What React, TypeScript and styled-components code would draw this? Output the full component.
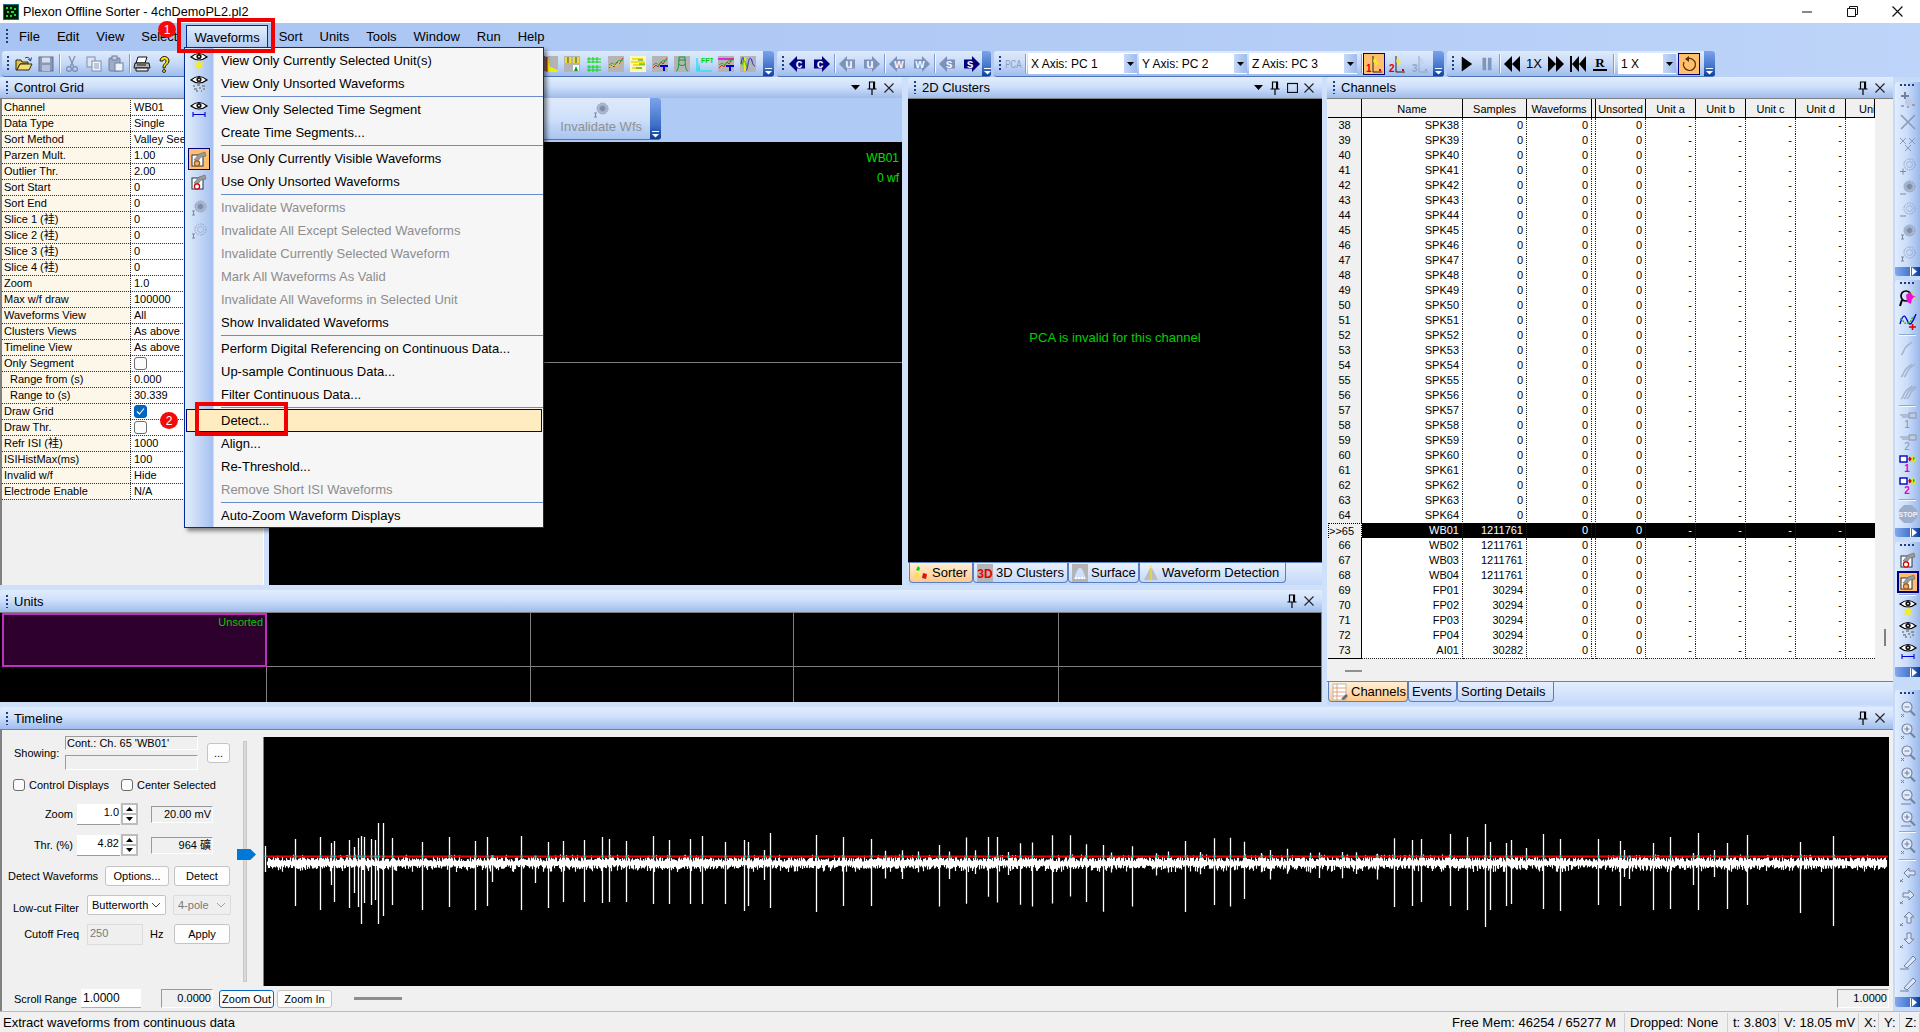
import React from "react";
import styled, { createGlobalStyle } from "styled-components";

const GlobalStyle = createGlobalStyle`
  html, body {
    margin: 0;
    padding: 0;
    background: #f0f0f0;
  }
  * {
    box-sizing: border-box;
  }
  body {
    font-family: "Liberation Sans", "Noto Sans CJK SC", sans-serif;
    font-size: 11px;
    color: #000;
  }
`;

const Page = styled.div`
  position: relative;
  width: 1920px;
  height: 1032px;
  overflow: hidden;
  display: flex;
  flex-direction: column;
  background: #f0f0f0;
`;

/* ---------- title + menu ---------- */

const TitleBar = styled.div`
  height: 23px;
  background: #fff;
  display: flex;
  align-items: center;
  padding-left: 3px;
  font-size: 12.7px;
  flex: none;
`;

const TitleText = styled.span`
  margin-left: 4px;
  flex: 1;
`;

const WinButton = styled.div`
  width: 45px;
  height: 23px;
  display: flex;
  align-items: center;
  justify-content: center;
`;

const MenuBar = styled.div`
  height: 28px;
  flex: none;
  display: flex;
  align-items: flex-start;
  padding: 2px 0 0 6px;
  background: linear-gradient(to right, #a8c4f2, #b3ccf6 60%, #bed4f9);
  font-size: 13px;
`;

const Grip = styled.div`
  width: 2px;
  height: 15px;
  flex: none;
  background: repeating-linear-gradient(to bottom, #1d3f82 0 2px, transparent 2px 4px);
`;

const MenuGrip = styled(Grip)`
  margin: 4px 2.5px 0 0;
`;

const MenuItem = styled.div<{ $open?: boolean }>`
  height: 23px;
  padding: 0 ${({ $open }) => ($open ? "7.5px" : "8.5px")};
  margin-right: ${({ $open }) => ($open ? "2px" : "0")};
  display: flex;
  align-items: center;
  border: ${({ $open }) => ($open ? "1px solid #002d96" : "none")};
  border-bottom: none;
  background: ${({ $open }) => ($open ? "linear-gradient(#e3eefd, #b3cbf2)" : "transparent")};
`;

/* ---------- toolbars ---------- */

const ToolRow = styled.div`
  height: 26px;
  flex: none;
  display: flex;
  gap: 3px;
  padding-left: 2px;
  background: linear-gradient(to right, #a8c4f2, #b3ccf6 60%, #bed4f9);
`;

const Toolbar = styled.div<{ $w: number }>`
  width: ${({ $w }) => $w}px;
  height: 26px;
  display: flex;
  align-items: center;
  padding-left: 5px;
  border-radius: 3px;
  overflow: hidden;
  background: linear-gradient(#dfebfc, #c6d9f8 50%, #9fbcec);
  border-bottom: 1px solid #4a73b8;
`;

const ToolGrip = styled(Grip)`
  margin-right: 2px;
`;

const Cell = styled.div<{ $w?: number; $on?: boolean }>`
  width: ${({ $w }) => $w ?? 22}px;
  height: 22px;
  flex: none;
  display: flex;
  align-items: center;
  justify-content: center;
  font-size: 13px;
  background: ${({ $on }) => ($on ? "#ffbf6d" : "transparent")};
  border: 1px solid ${({ $on }) => ($on ? "#000080" : "transparent")};
`;

const Gap = styled.div<{ $w: number }>`
  width: ${({ $w }) => $w}px;
  flex: none;
`;

const ToolSep = styled.div`
  width: 1px;
  height: 19px;
  flex: none;
  margin: 0 1px 0 2px;
  background: #7e9bd2;
  box-shadow: 1px 0 0 #f4f8ff;
`;

const ToolCap = styled.div`
  width: 11px;
  height: 26px;
  margin-left: auto;
  flex: none;
  display: flex;
  align-items: flex-end;
  justify-content: center;
  padding-bottom: 2px;
  background: linear-gradient(#7ba3ea, #3e70c8 65%, #083a94);
`;

const Combo = styled.div<{ $w: number }>`
  width: ${({ $w }) => $w}px;
  height: 21px;
  flex: none;
  margin-right: 2px;
  display: flex;
  align-items: center;
  background: #fff;
  font-size: 12px;
  padding-left: 3px;
`;

const ComboText = styled.span`
  flex: 1;
`;

const ComboArrow = styled.div`
  width: 13px;
  height: 19px;
  display: flex;
  align-items: center;
  justify-content: center;
  background: linear-gradient(to right, #c5d8f8, #9ebbed);
`;

const PcaLabel = styled.span`
  color: #8b9dbd;
  font-size: 11px;
  transform: scaleX(0.72);
`;

/* ---------- dock layout ---------- */

const Workspace = styled.div`
  flex: 1;
  min-height: 0;
  display: flex;
  background: #cfe0fb;
`;

const Dock = styled.div`
  width: 1893px;
  flex: none;
  display: flex;
  flex-direction: column;
`;

const UpperDock = styled.div`
  height: 628px;
  flex: none;
  display: flex;
`;

const LeftStack = styled.div`
  width: 1322px;
  flex: none;
  display: flex;
  flex-direction: column;
`;

const MainRow = styled.div`
  height: 508px;
  flex: none;
  display: flex;
`;

const Panel = styled.div<{ $w?: number; $ml?: number }>`
  width: ${({ $w }) => ($w ? `${$w}px` : "auto")};
  margin-left: ${({ $ml }) => $ml ?? 0}px;
  flex: none;
  display: flex;
  flex-direction: column;
  min-height: 0;
`;

const PanelHeader = styled.div<{ $h?: number }>`
  height: ${({ $h }) => $h ?? 21}px;
  flex: none;
  display: flex;
  align-items: center;
  padding: 0 5px 0 6px;
  border-top-left-radius: 3px;
  font-size: 13px;
  background: linear-gradient(#e2edfd, #cfe0fa 45%, #9fbcec);
`;

const HeaderGrip = styled(Grip)`
  margin-right: 6px;
  height: 13px;
`;

const HeaderTitle = styled.span`
  flex: 1;
`;

const HeaderIcon = styled.div`
  width: 16px;
  height: 16px;
  margin-left: 1px;
  display: flex;
  align-items: center;
  justify-content: center;
`;

const Sunken = styled.div`
  flex: 1;
  min-height: 0;
  display: flex;
  flex-direction: column;
  background: #f0f0f0;
  border-top: 1px solid #808080;
`;

/* ---------- control grid ---------- */

const GridBody = styled(Sunken)`
  border-left: 2px solid #808080;
  border-right: 1px solid #fff;
  padding-top: 1px;
`;

const GridRow = styled.div`
  height: 16px;
  flex: none;
  display: grid;
  grid-template-columns: 129px 1fr;
  border-bottom: 1px dotted #333;
`;

const GridName = styled.div<{ $indent?: boolean }>`
  background: #fdf7ea;
  border-right: 1px dotted #333;
  padding-left: ${({ $indent }) => ($indent ? "8px" : "2px")};
  line-height: 15px;
  white-space: nowrap;
`;

const GridValue = styled.div`
  background: #fff;
  padding-left: 3px;
  line-height: 15px;
  white-space: nowrap;
  display: flex;
  align-items: center;
`;

const CheckBox = styled.div<{ $on?: boolean; $size?: number }>`
  width: ${({ $size }) => $size ?? 13}px;
  height: ${({ $size }) => $size ?? 13}px;
  flex: none;
  border-radius: 3px;
  border: 1px solid ${({ $on }) => ($on ? "#0060c0" : "#6d6d6d")};
  background: ${({ $on }) => ($on ? "#0067c0" : "#fbfbfb")};
  display: flex;
  align-items: center;
  justify-content: center;
`;

/* ---------- middle panel ---------- */

const BandRow = styled.div`
  height: 44px;
  flex: none;
  background: #b0caf6;
  display: flex;
`;

const BigToolbar = styled.div`
  width: 392px;
  height: 42px;
  display: flex;
  justify-content: flex-end;
  border-radius: 3px;
  overflow: hidden;
  background: linear-gradient(#dfebfc, #cfe0fa 50%, #a9c4f0);
  border-bottom: 1px solid #4a73b8;
`;

const BigTool = styled.div`
  display: flex;
  flex-direction: column;
  align-items: center;
  justify-content: flex-end;
  padding: 0 8px 5px;
  color: #919191;
  font-size: 13px;
`;

const BigCap = styled(ToolCap)`
  margin-left: 0;
  height: 42px;
`;

const BlackTop = styled.div`
  height: 221px;
  flex: none;
  background: #000;
  border-bottom: 1px solid #808080;
  display: flex;
  flex-direction: column;
  align-items: flex-end;
  padding: 9px 3px 0 0;
  color: #00e000;
  font-size: 12px;
  gap: 6px;
`;

const BlackFill = styled.div`
  flex: 1;
  background: #000;
`;

/* ---------- clusters ---------- */

const ClusterView = styled.div`
  height: 464px;
  flex: none;
  background: #000;
  border-top: 1px solid #808080;
  display: flex;
  align-items: center;
  justify-content: center;
  color: #00d000;
  font-size: 13px;
  padding-top: 14px;
`;

const TabStrip = styled.div<{ $h?: number }>`
  height: ${({ $h }) => $h ?? 23}px;
  flex: none;
  display: flex;
  align-items: flex-start;
  padding-left: 1px;
  background: linear-gradient(#e4eefd, #c4d8f9);
  border-top: 1px solid #5e84c4;
`;

const Tab = styled.div<{ $w: number; $on?: boolean }>`
  width: ${({ $w }) => $w}px;
  height: 20px;
  flex: none;
  display: flex;
  align-items: center;
  gap: 3px;
  padding-left: 3px;
  font-size: 13px;
  white-space: nowrap;
  border: 1px solid #5b7fbe;
  border-top: none;
  border-radius: 0 0 4px 4px;
  background: ${({ $on }) => ($on ? "linear-gradient(#fff0d6, #ffc98a)" : "linear-gradient(#e8f0fd, #c6d9f9)")};
`;

/* ---------- units ---------- */

const UnitsPanel = styled(Panel)`
  margin-top: 5px;
  height: 112px;
`;

const UnitsGrid = styled.div`
  flex: 1;
  display: grid;
  grid-template-columns: 265px 264px 263px 265px 1fr;
  grid-template-rows: 54px 1fr;
  background: #000;
  border-top: 1px solid #808080;
  padding-left: 2px;
`;

const UnitCell = styled.div<{ $mark?: boolean; $bottom?: boolean }>`
  border-right: 1px solid #808080;
  border-bottom: ${({ $bottom }) => ($bottom ? "1px solid #808080" : "none")};
  outline: ${({ $mark }) => ($mark ? "2px solid #c030c0" : "none")};
  outline-offset: -2px;
  background: ${({ $mark }) => ($mark ? "#2e002e" : "#000")};
  color: #00c800;
  font-size: 11px;
  text-align: right;
  padding: 3px 3px 0 0;
`;

/* ---------- channels ---------- */

const ChannelsBody = styled(Sunken)`
  flex-direction: row;
  height: 583px;
  flex: none;
  padding-left: 1px;
`;

const ChannelsMain = styled.div`
  width: 547px;
  flex: none;
  display: flex;
  flex-direction: column;
`;

const Gutter = styled.div`
  flex: 1;
  padding-left: 9px;
`;

const GutterThumb = styled.div`
  width: 2px;
  height: 17px;
  margin-top: 530px;
  background: #808080;
`;

const HeadRow = styled.div`
  height: 19px;
  flex: none;
  display: grid;
  grid-template-columns: 34px 101px 64px 65px 4px 50px 50px 50px 50px 50px 29px;
  border-bottom: 1px solid #000;
`;

const HeadCell = styled.div<{ $clip?: boolean }>`
  background: #f0f0f0;
  border-right: 1px solid #000;
  text-align: ${({ $clip }) => ($clip ? "left" : "center")};
  padding-left: ${({ $clip }) => ($clip ? "13px" : "0")};
  line-height: 20px;
  white-space: nowrap;
  overflow: hidden;
`;

const DataRow = styled(HeadRow)<{ $sel?: boolean }>`
  height: 15px;
  border-bottom: none;
  background: ${({ $sel }) => ($sel ? "#000" : "#fff")};
  color: ${({ $sel }) => ($sel ? "#fff" : "#000")};
`;

const RowHead = styled.div<{ $cur?: boolean }>`
  background: #f0f0f0;
  color: #000;
  text-align: ${({ $cur }) => ($cur ? "right" : "center")};
  padding-right: ${({ $cur }) => ($cur ? "11px" : "0")};
  line-height: 15px;
  border-right: 1px ${({ $cur }) => ($cur ? "dotted" : "solid")} #000;
  border-bottom: 1px ${({ $cur }) => ($cur ? "dotted" : "solid")} #000;
  border-top: ${({ $cur }) => ($cur ? "1px dotted #000" : "none")};
  border-left: ${({ $cur }) => ($cur ? "1px dotted #000" : "none")};
`;

const DataCell = styled.div`
  text-align: right;
  padding-right: 3px;
  line-height: 15px;
  border-right: 1px dotted #222;
  border-bottom: 1px dotted #222;
  overflow: hidden;
  white-space: nowrap;
`;

const LastCell = styled(DataCell)`
  border-right: none;
`;

const ScrollStub = styled.div`
  flex: 1;
  padding: 12px 0 0 17px;
`;

const HThumb = styled.div<{ $w: number }>`
  width: ${({ $w }) => $w}px;
  height: 2px;
  background: #909090;
`;

const ChannelTabs = styled(TabStrip)`
  height: 24px;
`;

/* ---------- timeline ---------- */

const TimelinePanel = styled.div`
  margin-top: 2px;
  flex: 1;
  min-height: 0;
  display: flex;
  flex-direction: column;
`;

const TimelineBody = styled(Sunken)`
  border-left: 2px solid #808080;
`;

const TimelineUpper = styled.div`
  height: 257px;
  flex: none;
  display: flex;
`;

const Controls = styled.div`
  width: 233px;
  flex: none;
  display: flex;
  flex-direction: column;
`;

const CtlRow = styled.div<{ $h: number; $mt: number; $pl?: number }>`
  height: ${({ $h }) => $h}px;
  margin-top: ${({ $mt }) => $mt}px;
  padding-left: ${({ $pl }) => $pl ?? 0}px;
  flex: none;
  display: flex;
  align-items: center;
`;

const CtlLabel = styled.div<{ $w: number; $right?: boolean; $ml?: number; $drop?: number }>`
  width: ${({ $w }) => $w}px;
  margin-left: ${({ $ml }) => $ml ?? 0}px;
  padding-top: ${({ $drop }) => $drop ?? 0}px;
  text-align: ${({ $right }) => ($right ? "right" : "left")};
  flex: none;
  white-space: nowrap;
`;

const FieldStack = styled.div`
  width: 133px;
  display: flex;
  flex-direction: column;
  gap: 5px;
  flex: none;
`;

const ReadField = styled.div<{ $w?: number; $h?: number; $ml?: number; $right?: boolean }>`
  width: ${({ $w }) => ($w ? `${$w}px` : "100%")};
  height: ${({ $h }) => $h ?? 15}px;
  margin-left: ${({ $ml }) => $ml ?? 0}px;
  flex: none;
  border: 1px solid;
  border-color: #9a9a9a #fff #fff #9a9a9a;
  padding: 0 1px;
  line-height: ${({ $h }) => ($h ?? 15) - 2}px;
  text-align: ${({ $right }) => ($right ? "right" : "left")};
  white-space: nowrap;
  overflow: hidden;
  background: #f0f0f0;
`;

const PushButton = styled.div<{ $w: number; $h?: number; $ml?: number; $focus?: boolean }>`
  width: ${({ $w }) => $w}px;
  height: ${({ $h }) => $h ?? 20}px;
  margin-left: ${({ $ml }) => $ml ?? 0}px;
  flex: none;
  display: flex;
  align-items: center;
  justify-content: center;
  background: #fdfdfd;
  border: 1px solid ${({ $focus }) => ($focus ? "#0067c0" : "#c4c4c4")};
  border-radius: 3px;
  white-space: nowrap;
`;

const NumInput = styled.div<{ $w: number; $ml?: number; $disabled?: boolean }>`
  width: ${({ $w }) => $w}px;
  height: 21px;
  margin-left: ${({ $ml }) => $ml ?? 0}px;
  flex: none;
  background: ${({ $disabled }) => ($disabled ? "#efefef" : "#fff")};
  color: ${({ $disabled }) => ($disabled ? "#7a7a7a" : "#000")};
  border: ${({ $disabled }) => ($disabled ? "1px solid #dcdcdc" : "none")};
  border-bottom: 1px solid ${({ $disabled }) => ($disabled ? "#dcdcdc" : "#9a9a9a")};
  display: flex;
  align-items: center;
  justify-content: ${({ $disabled }) => ($disabled ? "flex-start" : "flex-end")};
  padding: 0 1px 3px 2px;
`;

const Spinner = styled.div`
  width: 17px;
  height: 22px;
  flex: none;
  margin-left: 1px;
  display: flex;
  flex-direction: column;
  justify-content: center;
  gap: 0;
  background: #f0f0f0;
  border: 1px solid #bdbdbd;
`;

const SpinBtn = styled.div`
  flex: 1;
  display: flex;
  align-items: center;
  justify-content: center;
  background: #fdfdfd;
  border: 1px solid #bdbdbd;
`;

const SelectBox = styled.div<{ $w: number; $ml?: number; $disabled?: boolean }>`
  width: ${({ $w }) => $w}px;
  height: 20px;
  margin-left: ${({ $ml }) => $ml ?? 0}px;
  flex: none;
  display: flex;
  align-items: center;
  justify-content: space-between;
  padding: 0 4px 0 4px;
  color: ${({ $disabled }) => ($disabled ? "#7a7a7a" : "#000")};
  background: ${({ $disabled }) => ($disabled ? "#efefef" : "#fdfdfd")};
  border: 1px solid ${({ $disabled }) => ($disabled ? "#dcdcdc" : "#c4c4c4")};
  border-radius: 2px;
`;

const SliderCol = styled.div`
  width: 28px;
  flex: none;
  padding: 11px 0 5px 8px;
`;

const SliderTrack = styled.div`
  position: relative;
  width: 4px;
  height: 100%;
  background: #d9d9d9;
  border: 1px solid #c8c8c8;
`;

const SliderMark = styled.div`
  position: absolute;
  left: -7px;
  top: 107px;
  width: 19px;
  height: 11px;
  background: #0078d7;
  clip-path: polygon(0 0, 70% 0, 100% 50%, 70% 100%, 0 100%);
`;

const PlotColumn = styled.div`
  width: 1626px;
  flex: none;
  padding-top: 7px;
`;

const Plot = styled.div`
  height: 249px;
  background: #000;
  border-left: 1px solid #808080;
  line-height: 0;
`;

const TimelineLower = styled.div`
  flex: 1;
  display: flex;
  align-items: center;
  padding-bottom: 1px;
`;

const LowerThumb = styled.div`
  width: 48px;
  height: 3px;
  margin-left: 22px;
  background: #8e8e8e;
`;

const LowerEnd = styled.div`
  margin-left: auto;
  margin-right: 4px;
`;

const ScrollInput = styled.div`
  width: 60px;
  height: 19px;
  flex: none;
  background: #fff;
  border-bottom: 1px solid #b0b0b0;
  padding-left: 2px;
  line-height: 19px;
  font-size: 12px;
`;

/* ---------- status ---------- */

const StatusBar = styled.div`
  height: 21px;
  flex: none;
  display: flex;
  align-items: center;
  background: #f0f0f0;
  border-top: 1px solid #b8b8b8;
  font-size: 13px;
  padding-left: 3px;
`;

const StatusMain = styled.div`
  flex: 1;
`;

const StatusCell = styled.div<{ $w: number }>`
  width: ${({ $w }) => $w}px;
  height: 19px;
  flex: none;
  border-right: 1px solid #d0d0d0;
  line-height: 19px;
  padding-left: 5px;
  white-space: nowrap;
`;

/* ---------- right rail ---------- */

const Rail = styled.div`
  flex: 1;
  display: flex;
  flex-direction: column;
  align-items: flex-end;
  background: #c6daf9;
`;

const RailBar = styled.div<{ $mt: number }>`
  width: 25px;
  margin-top: ${({ $mt }) => $mt}px;
  flex: none;
  display: flex;
  flex-direction: column;
  align-items: center;
  border-radius: 3px 0 0 3px;
  overflow: hidden;
  background: linear-gradient(to right, #e2edfd, #c9dcfa 50%, #9ab8ea);
`;

const RailGrip = styled.div<{ $h: number }>`
  width: 100%;
  height: ${({ $h }) => $h}px;
  flex: none;
  padding: 2px 4px 0 5px;
  &::before {
    content: "";
    display: block;
    height: 2px;
    background: repeating-linear-gradient(to right, #1d3f82 0 2px, transparent 2px 4px);
  }
`;

const RailSep = styled.div<{ $h: number }>`
  width: 100%;
  height: ${({ $h }) => $h}px;
  flex: none;
  display: flex;
  align-items: center;
  padding: 0 4px;
  &::before {
    content: "";
    width: 100%;
    height: 1px;
    background: #f4f8ff;
    box-shadow: 0 -1px 0 #8ba6d8;
  }
`;

const RailCell = styled.div<{ $on?: boolean }>`
  width: 22px;
  height: 22px;
  flex: none;
  display: flex;
  align-items: center;
  justify-content: center;
  background: ${({ $on }) => ($on ? "#ffbf6d" : "transparent")};
  border: ${({ $on }) => ($on ? "2px solid #000080" : "none")};
`;

const RailCap = styled.div<{ $h: number; $mt: number }>`
  width: 100%;
  height: ${({ $h }) => $h}px;
  margin-top: ${({ $mt }) => $mt}px;
  flex: none;
  display: flex;
  align-items: center;
  justify-content: flex-end;
  padding-right: 2px;
  background: linear-gradient(to right, #84a9ec, #3a6ec9 70%, #0a3c98);
`;

/* ---------- dropdown + annotation overlays ---------- */

const Dropdown = styled.div`
  position: absolute;
  left: 184px;
  top: 47px;
  width: 360px;
  height: 481px;
  padding: 1px 0 0 0;
  background: linear-gradient(to right, #e3eefc, #a5c0f0 28px, #f6f6f6 29px);
  border: 1px solid #002d96;
  box-shadow: 3px 3px 4px rgba(0, 0, 0, 0.45);
  font-size: 13px;
`;

const DropItem = styled.div<{ $disabled?: boolean; $hot?: boolean }>`
  height: 23px;
  display: flex;
  align-items: center;
  color: ${({ $disabled }) => ($disabled ? "#8d8d8d" : "#000")};
  background: ${({ $hot }) => ($hot ? "#ffecc0" : "transparent")};
  border: 1px solid ${({ $hot }) => ($hot ? "#000080" : "transparent")};
  margin: 0 1px;
  white-space: nowrap;
`;

const DropIcon = styled.div<{ $on?: boolean }>`
  width: 20px;
  height: 20px;
  margin: 0 12px 0 2px;
  flex: none;
  display: flex;
  align-items: center;
  justify-content: center;
  background: ${({ $on }) => ($on ? "#ffbf6d" : "transparent")};
  outline: ${({ $on }) => ($on ? "1px solid #000080" : "none")};
`;

const DropSep = styled.div`
  height: 3px;
  margin-left: 36px;
  display: flex;
  align-items: center;
  &::before {
    content: "";
    width: 100%;
    height: 1px;
    background: #6a8ccb;
  }
`;

const RedBox = styled.div<{ $x: number; $y: number; $w: number; $h: number }>`
  position: absolute;
  left: ${({ $x }) => $x}px;
  top: ${({ $y }) => $y}px;
  width: ${({ $w }) => $w}px;
  height: ${({ $h }) => $h}px;
  border: 4px solid #f00000;
`;

const Badge = styled.div<{ $x: number; $y: number }>`
  position: absolute;
  left: ${({ $x }) => $x - 9}px;
  top: ${({ $y }) => $y - 8}px;
  width: 18px;
  height: 17px;
  border-radius: 50%;
  background: #f30a0a;
  color: #fff;
  display: flex;
  align-items: center;
  justify-content: center;
  font-size: 12px;
`;

/* ---------- drawings ---------- */

const Svg = ({ s = 18, vb = 18, children }: { s?: number; vb?: number; children: React.ReactNode }) => (
  <svg width={s} height={s} viewBox={`0 0 ${vb} ${vb}`}>
    {children}
  </svg>
);

const Eye = ({ under }: { under?: "spark" | "noise" | "bar" }) => (
  <Svg>
    <path d="M1 5 Q9 -2 17 5 Q9 11 1 5z" fill="#fff" stroke="#000" strokeWidth="1.2" />
    <circle cx="9" cy="4.6" r="2.6" fill="#111" />
    <circle cx="9" cy="4.6" r="0.9" fill="#fff" />
    {under === "spark" && <path d="M9 8 l1.5 3 3-1-2 3 2 3-3.2-1-1.3 2.6-1.3-2.6-3.2 1 2-3-2-3 3 1z" fill="#f4ee20" />}
    {under === "noise" && <path d="M3 11h2M7 10h3M12 11h3M4 14h3M9 13h2M13 14h2M6 16h2M11 16h1" stroke="#808080" strokeWidth="1.4" />}
    {under === "bar" && <path d="M3 11v5M15 11v5M3 13.5h12" stroke="#0000d0" strokeWidth="1.1" fill="none" />}
  </Svg>
);

const HandBox = ({ mark }: { mark: "red" | "tan" }) => (
  <Svg>
    <rect x="2" y="5" width="11" height="11" fill="#fff" stroke="#23324f" />
    <path d="M4 10 L9 4 L15 2 L16 6 L11 7 L8 11z" fill="#9a9a9a" stroke="#666" strokeWidth="0.6" />
    <circle cx="7" cy="13.5" r="2.6" fill={mark === "red" ? "#fff" : "#e8b070"} stroke={mark === "red" ? "#d00000" : "#a05a10"} strokeWidth="1.3" />
  </Svg>
);

const Inval = ({ kind }: { kind: "minus" | "ring" | "i" | "iring" | "plus" | "mring" }) => {
  const filled = kind === "minus" || kind === "i";
  return (
    <Svg>
      <circle cx="10.5" cy="7.5" r="5.5" fill={filled ? "#a9b8d0" : "none"} stroke="#8d9cb6" strokeWidth="1" strokeDasharray="1.5 1" />
      <circle cx="10.5" cy="7.5" r="3" fill={filled ? "#7d8da8" : "none"} stroke="#9dacc6" strokeWidth="0.8" />
      {(kind === "i" || kind === "iring") && <path d="M2 12h3M3.5 12v4M2 16h3" stroke="#7a89a4" fill="none" />}
      {(kind === "minus" || kind === "mring") && <path d="M1 15h6" stroke="#7a89a4" />}
      {kind === "plus" && <path d="M1 14.5h6M4 11.5v6" stroke="#7a89a4" />}
    </Svg>
  );
};

const Open = () => (
  <Svg>
    <path d="M1 15V5h5l1 2h6v2H5L2 15z" fill="#e4c24a" stroke="#2b2b10" />
    <path d="M2 15l3-6h12l-3 6z" fill="#f4dd72" stroke="#2b2b10" />
    <path d="M10 3c3-1.5 5 0 5.5 3M16.5 2.5l-1 3.5-2.4-2" fill="none" stroke="#1e3f78" />
  </Svg>
);

const Floppy = () => (
  <Svg>
    <rect x="2" y="2" width="14" height="14" fill="#8898b8" stroke="#5f6f90" />
    <rect x="5" y="2.5" width="8" height="5" fill="#d7dfec" />
    <rect x="5" y="10" width="8" height="6" fill="#b4c1d6" />
  </Svg>
);

const Scissors = () => (
  <Svg>
    <path d="M6 1l4.8 11M12 1L7.2 12" stroke="#7d8dab" strokeWidth="1.2" />
    <circle cx="6" cy="14" r="2.4" fill="none" stroke="#7d8dab" strokeWidth="1.2" />
    <circle cx="12" cy="14" r="2.4" fill="none" stroke="#7d8dab" strokeWidth="1.2" />
  </Svg>
);

const Copy = () => (
  <Svg>
    <rect x="2" y="2" width="8" height="10" fill="#dce5f3" stroke="#7d8dab" />
    <rect x="7" y="6" width="9" height="10" fill="#eef2f9" stroke="#7d8dab" />
    <path d="M9 9h5M9 11h5M9 13h5" stroke="#8d9cb6" />
  </Svg>
);

const Paste = () => (
  <Svg>
    <rect x="2" y="3" width="11" height="13" rx="1" fill="#9fadc5" stroke="#6f7f9d" />
    <rect x="5" y="1" width="5" height="4" fill="#c5cfe0" stroke="#6f7f9d" />
    <rect x="8" y="8" width="8" height="8" fill="#eef2f9" stroke="#6f7f9d" />
  </Svg>
);

const Printer = () => (
  <Svg>
    <path d="M5 2h9l-2 6H3z" fill="#fff" stroke="#111" />
    <path d="M2 8h14l1 5H1z" fill="#b5b5b5" stroke="#111" />
    <path d="M3 13h12v3H3z" fill="#ededed" stroke="#111" />
    <path d="M4 10h9" stroke="#111" />
  </Svg>
);

const Help = () => (
  <Svg>
    <path d="M5 6c0-6 9-6 9 0 0 4-4 3-4 7H8c0-5 3-4 3-7 0-2-3-2-3 0z" fill="#ffe400" stroke="#000" strokeWidth="0.9" />
    <circle cx="9" cy="16" r="1.5" fill="#ffe400" stroke="#000" strokeWidth="0.8" />
  </Svg>
);

const Mark = () => (
  <Svg>
    <rect x="7" y="2" width="4" height="9" fill="#111" />
    <circle cx="9" cy="14.5" r="2" fill="#111" />
  </Svg>
);

const Chart = ({ n }: { n: number }) => {
  const zig = <path d="M2 13l3-3 2 2 3-5 2 2 4-6" fill="none" stroke="#e02020" />;
  const zig2 = <path d="M2 10l3-2 3 2 3-4 5-1" fill="none" stroke="#30b030" />;
  const tee = <path d="M9 11h8M13 11v5" stroke="#0000d8" strokeWidth="2" />;
  return (
    <Svg>
      {n !== 2 && n !== 7 && <rect x="1" y="1" width="16" height="16" fill="#b4b4b4" />}
      {n === 0 && (
        <>
          <path d="M3 1v15M5 2v14" stroke="#222" />
          <path d="M6 3h1l2 9 8 3v2H6z" fill="#f2ee00" />
          <path d="M6 2v15" stroke="#e00000" />
        </>
      )}
      {n === 1 && (
        <>
          <rect x="2" y="2" width="6" height="6" fill="#eedd30" />
          <rect x="10" y="2" width="6" height="6" fill="#eedd30" />
          <rect x="10" y="10" width="6" height="6" fill="#fff" />
          <path d="M5 2v6M13 2v6" stroke="#444" />
          <path d="M11 16l2-5 2 5z" fill="#0a9a30" />
        </>
      )}
      {n === 2 && <path d="M2 4h14M2 7h14M2 12h14M2 15h14M4 2v6M8 2v6M12 2v6M4 10v7M8 10v7M12 10v7" stroke="#00e000" />}
      {n === 3 && (
        <>
          {zig}
          {zig2}
          <path d="M3 12l4-2 3 1 3-5" stroke="#f0e000" fill="none" />
        </>
      )}
      {n === 4 && (
        <>
          <rect x="1" y="1" width="16" height="16" fill="#fbf6c4" />
          <path d="M3 4h11M2 7h14M4 10h12M3 13h10" stroke="#f0e020" strokeWidth="2" />
          <path d="M9 5h5M10 9h6M7 13h6" stroke="#18a818" />
        </>
      )}
      {n === 5 && (
        <>
          {zig}
          {zig2}
          {tee}
        </>
      )}
      {n === 6 && <path d="M6 2h6M5 5h8M3 16c2 0 3-5 3-14M15 16c-2 0-3-5-3-14M5 9c3 2 5 2 8 0" fill="none" stroke="#139a3a" />}
      {n === 7 && (
        <>
          <path d="M2 3v13h15" stroke="#00e8e8" strokeWidth="1.2" fill="none" />
          <path d="M3 15l1-8 1 8z" fill="#00e8e8" />
          <text x="6" y="8" fontSize="7" fontWeight="bold" fill="#00d000">FFT</text>
        </>
      )}
      {n === 8 && (
        <>
          <path d="M1 4h16" stroke="#e000e0" strokeWidth="1.4" />
          {zig}
          {zig2}
          {tee}
        </>
      )}
      {n === 9 && (
        <>
          <path d="M2 9c2-12 3-5 4 2s2 5 3-2 3-7 4-3 2 5 3 5" fill="none" stroke="#2020e0" />
          <path d="M6 2v14" stroke="#f0e800" strokeWidth="2" />
          <path d="M3 10c2-8 3-4 5 3" fill="none" stroke="#10c010" />
        </>
      )}
    </Svg>
  );
};

const NavArrow = ({ left, letter, on }: { left?: boolean; letter: string; on?: boolean }) => (
  <Svg s={20} vb={20}>
    <g transform={left ? undefined : "translate(20 0) scale(-1 1)"}>
      <path d="M1 10 L9 2 V5.5 H17 V14.5 H9 V18z" fill={on ? "#00007e" : "#7c92ba"} />
    </g>
    <text x={left ? 11 : 9} y="14" fontSize="12" fontWeight="bold" textAnchor="middle" fill="#f4f7ff">{letter}</text>
  </Svg>
);

const Axes = ({ num, on }: { num: string; on?: boolean }) => (
  <Svg s={20} vb={20}>
    <path d="M9 2v16h9" stroke={on === false ? "#97a6c0" : "#222"} fill="none" />
    <path d="M10 4l3 2 -1 2 3 1-4 3 1-3-3-1z" fill={on === false ? "#c6d0e2" : "#f4ee20"} />
    <text x="2" y="18" fontSize="10" fontWeight="bold" fill={on === false ? "#97a6c0" : "#e00000"}>{num}</text>
    <path d="M15 15l2 2M17 15l-2 2" stroke={on === false ? "#97a6c0" : "#e00000"} />
  </Svg>
);

const Transport = ({ d, fill = "#000" }: { d: string; fill?: string }) => (
  <Svg s={20} vb={20}>
    <path d={d} fill={fill} />
  </Svg>
);

const Recording = () => (
  <Svg s={20} vb={20}>
    <text x="10" y="13" fontSize="13" fontWeight="bold" fontFamily="Liberation Serif, serif" textAnchor="middle">R</text>
    <rect x="3" y="15" width="14" height="2" fill="#000" />
  </Svg>
);

const Loop = () => (
  <Svg>
    <path d="M7 4 A6 6 0 1 1 4 7" fill="none" stroke="#5a3000" strokeWidth="1.2" />
    <path d="M9 1v6l-4-3z" fill="#5a3000" />
  </Svg>
);

const Magnify = ({ sign, below }: { sign: string; below?: boolean }) => (
  <Svg>
    <circle cx="8" cy="7" r="5" fill="#e0eafa" stroke="#6f80a0" strokeWidth="1.1" />
    <path d="M11.5 11L16 15.5" stroke="#6f80a0" strokeWidth="2" />
    <path d={sign === "-" ? "M5.5 7h5" : "M5.5 7h5M8 4.5v5"} stroke="#6f80a0" strokeWidth="1.1" />
    {below ? <path d="M2 16h10" stroke="#6f80a0" /> : <path d="M2 14l3 3M5 14l-3 3" stroke="#6f80a0" />}
  </Svg>
);

const SmallArrow = ({ rot }: { rot: number }) => (
  <Svg>
    <g transform={`rotate(${rot} 10 8)`}>
      <path d="M5 8l5-5v3h6v4h-6v3z" fill="#dbe5f5" stroke="#6f80a0" />
    </g>
    <path d="M1 15l3 2M4 14l-3 3" stroke="#6f80a0" />
  </Svg>
);

const Pencil = () => (
  <Svg>
    <path d="M5 13L14 3l3 3-9 9z" fill="#dbe5f5" stroke="#6f80a0" />
    <path d="M1 16h9" stroke="#6f80a0" />
  </Svg>
);

const Strokes = ({ count }: { count: number }) => (
  <Svg>
    {Array.from({ length: count }).map((_, i) => (
      <path key={i} d={`M${2 + i * 3} 15c3-2 2-5 5-8s4-3 6-5`} fill="none" stroke="#a3b2cc" strokeWidth="1.5" />
    ))}
  </Svg>
);

const Funnel = ({ num }: { num: string }) => (
  <Svg>
    <rect x="10" y="2" width="7" height="5" fill="#c0cbdf" stroke="#8393b0" />
    <path d="M1 4h9M3 6h7" stroke="#a3b2cc" strokeWidth="1.4" />
    <text x="8" y="17" fontSize="10" fill="#8393b0" textAnchor="middle">{num}</text>
  </Svg>
);

const Assign = ({ num }: { num: string }) => (
  <Svg>
    <rect x="1" y="1" width="7" height="6" fill="#fff" stroke="#0000c0" strokeWidth="1.4" />
    <path d="M8 4h4M10 2l3 2-3 2" stroke="#e00000" fill="#e00000" />
    <path d="M13 1l3 1 1 3-2 3-3-2z" fill="#d8e820" />
    <path d="M14 2l2 1-2 3z" fill="#10b030" />
    <text x="8" y="17" fontSize="10" fontWeight="bold" fill="#e000d0" textAnchor="middle">{num}</text>
  </Svg>
);

const Stop = () => (
  <Svg s={20} vb={20}>
    <path d="M6 1h8l5 5v8l-5 5H6l-5-5V6z" fill="#9caecb" />
    <text x="10" y="13" fontSize="7" fontWeight="bold" fill="#eef3fb" textAnchor="middle">STOP</text>
  </Svg>
);

const BigX = ({ small }: { small?: boolean }) => (
  <Svg>
    {small ? (
      <path d="M1 3l6 6M7 3L1 9M10 3l6 6M16 3l-6 6M6 10l6 6M12 10l-6 6" stroke="#8a9ab8" />
    ) : (
      <path d="M2 2l14 14M16 2L2 16" stroke="#8a9ab8" strokeWidth="1.6" />
    )}
  </Svg>
);

const ScatterTool = () => (
  <Svg>
    <path d="M6 1v7M2 5h8" stroke="#6f80a0" strokeWidth="2" />
    <circle cx="10" cy="11" r="4" fill="#c0cbdf" />
    <path d="M2 15h3M8 16h2M13 14h3" stroke="#8393b0" strokeWidth="1.5" />
  </Svg>
);

const PickTool = () => (
  <Svg>
    <circle cx="7" cy="6" r="5" fill="none" stroke="#000" strokeWidth="1.7" />
    <path d="M3 10l-2 6" stroke="#000" strokeWidth="2" />
    <path d="M7 5l4-3 2 3 4 2-4 2-1 5-4-2z" fill="#ee10d8" />
    <path d="M12 2l2 2M14 8h3" stroke="#e8d810" strokeWidth="1.4" />
  </Svg>
);

const WaveAdd = () => (
  <Svg>
    <path d="M1 12c4-14 6-6 8-2s4 2 8-8" fill="none" stroke="#0000d8" strokeWidth="1.4" />
    <path d="M1 7c4 0 3 6 8 4s3-6 6-6" fill="none" stroke="#18b018" strokeWidth="1.4" strokeDasharray="2 1" />
    <path d="M10 15h7M13.5 12v6" stroke="#e00000" strokeWidth="1.6" />
  </Svg>
);

const DropMark = () => (
  <svg width="9" height="7" viewBox="0 0 9 7">
    <path d="M1 0.5h7" stroke="#fff" />
    <path d="M1 3h7L4.5 6.5z" fill="#fff" />
  </svg>
);

const RailMark = () => (
  <svg width="8" height="9" viewBox="0 0 8 9">
    <path d="M0.5 0v9" stroke="#fff" />
    <path d="M2 0.5l5 4-5 4z" fill="#fff" />
  </svg>
);

const Down = () => (
  <svg width="7" height="4" viewBox="0 0 7 4">
    <path d="M0 0h7L3.5 4z" fill="#000" />
  </svg>
);

const Chevron = ({ gray }: { gray?: boolean }) => (
  <svg width="10" height="6" viewBox="0 0 10 6">
    <path d="M1 1l4 4 4-4" fill="none" stroke={gray ? "#a0a0a0" : "#404040"} />
  </svg>
);

const Pin = () => (
  <svg width="10" height="14" viewBox="0 0 10 14">
    <path d="M2.5 1h5v7h-5zM0.5 8h9M5 8v6" fill="none" stroke="#000" strokeWidth="1.2" />
    <path d="M6 1h1.5v7H6z" fill="#000" />
  </svg>
);

const CloseX = ({ s = 10, c = "#222" }: { s?: number; c?: string }) => (
  <svg width={s} height={s} viewBox="0 0 10 10">
    <path d="M0.5 0.5l9 9M9.5 0.5l-9 9" stroke={c} strokeWidth="1.1" fill="none" />
  </svg>
);

const Maximize = () => (
  <svg width="11" height="11" viewBox="0 0 11 11">
    <rect x="0.5" y="1.5" width="10" height="9" fill="none" stroke="#111" strokeWidth="1.2" />
  </svg>
);

const Triangle = () => (
  <svg width="9" height="5" viewBox="0 0 9 5">
    <path d="M0 0h9L4.5 5z" fill="#000" />
  </svg>
);

const AppIcon = () => (
  <svg width="16" height="16" viewBox="0 0 16 16">
    <rect x="0.5" y="0.5" width="15" height="15" fill="#001a00" stroke="#15717f" />
    <path d="M3 3h2v2H3zM7 3h2v2H7zM11 4h2v2h-2zM4 7h2v2H4zM8 7h3v2H8zM3 11h2v2H3zM7 11h2v2H7zM11 10h2v2h-2z" fill="#19e030" />
  </svg>
);

const SpinTri = ({ up }: { up?: boolean }) => (
  <svg width="7" height="4" viewBox="0 0 7 4">
    <path d={up ? "M3.5 0L7 4H0z" : "M0 0h7L3.5 4z"} fill="#000" />
  </svg>
);

const Check = () => (
  <svg width="9" height="9" viewBox="0 0 9 9">
    <path d="M1 4.5l2.5 2.5L8 1.5" fill="none" stroke="#fff" strokeWidth="1.1" />
  </svg>
);

const TabSorter = () => (
  <Svg s={16} vb={16}>
    <path d="M5 1l2 2-1 3-3-1z" fill="#10d010" />
    <path d="M3 8l3 1-1 4-3-1z" fill="#f0ee10" />
    <path d="M10 8l4 1-1 5-4-1z" fill="#e01010" />
  </Svg>
);

const Tab3D = () => (
  <svg width="16" height="18" viewBox="0 0 16 18">
    <rect width="16" height="18" fill="#b4b4b4" />
    <text x="8" y="14" fontSize="12" fontWeight="bold" fill="#e80000" textAnchor="middle">3D</text>
  </svg>
);

const TabSurface = () => (
  <svg width="16" height="18" viewBox="0 0 16 18">
    <rect width="16" height="18" fill="#b4b4b4" />
    <path d="M2 15c2-5 3-11 6-11s4 6 6 11z" fill="#cfe0ff" />
    <path d="M3 14h10" stroke="#fff" strokeWidth="2" strokeDasharray="2 1" />
  </svg>
);

const TabWave = () => (
  <svg width="16" height="18" viewBox="0 0 16 18">
    <path d="M1 16h14L9 4H7z" fill="#bdbdbd" />
    <path d="M8 1v16" stroke="#ffe800" />
  </svg>
);

const TabSheet = () => (
  <svg width="16" height="18" viewBox="0 0 16 18">
    <rect x="1" y="1" width="13" height="16" fill="#fff" stroke="#b8b8b8" />
    <path d="M1 5h13M1 9h13M1 13h13M5 1v16" stroke="#e0a080" />
    <path d="M9 16l5-5 2 2-4 4z" fill="#6a6a6a" />
  </svg>
);

/* ---------- waveform ---------- */

const rngFrom = (seed: number) => {
  let s = seed;
  return () => {
    s = (s * 16807) % 2147483647;
    return s / 2147483647;
  };
};

const PLOT_W = 1625;
const PLOT_TOP = 737;
const spikes: Array<[number, number, number]> = [
  [265, 846, 872], [295, 839, 906], [320, 837, 910], [331, 843, 885], [334, 841, 902], [349, 840, 908],
  [354, 847, 893], [358, 838, 907], [361, 836, 924], [364, 837, 903], [371, 839, 905], [375, 840, 900],
  [378, 823, 924], [383, 823, 916], [392, 838, 905], [422, 842, 910], [449, 837, 907], [475, 841, 910],
  [487, 837, 906], [492, 855, 882], [521, 836, 910], [535, 857, 883], [548, 842, 908], [563, 841, 902],
  [584, 840, 902], [602, 837, 903], [609, 839, 902], [626, 841, 902], [653, 836, 904], [669, 840, 904],
  [690, 839, 904], [702, 836, 904], [725, 842, 904], [744, 840, 911], [748, 842, 906], [764, 850, 880],
  [770, 833, 908], [816, 835, 912], [843, 837, 906], [871, 839, 906],
  [1412, 840, 906], [1421, 839, 902], [1450, 834, 906], [1467, 837, 910], [1485, 824, 927], [1490, 842, 910],
  [1506, 843, 906], [1511, 840, 904], [1526, 848, 870], [1543, 834, 909], [1560, 839, 911], [1598, 839, 905],
  [1620, 841, 906], [1624, 850, 877], [1629, 860, 879], [1653, 843, 910], [1670, 837, 909], [1693, 853, 885],
  [1698, 833, 910], [1714, 850, 877], [1727, 843, 909], [1747, 835, 905], [1800, 842, 913], [1833, 836, 926],
];

const buildWave = () => {
  const rnd = rngFrom(48271);
  const all = [...spikes];
  for (let x = 885; x < 1405; x += 8 + Math.floor(rnd() * 18)) {
    const big = rnd() > 0.45;
    all.push([x, big ? 835 + rnd() * 12 : 848 + rnd() * 6, big ? 895 + rnd() * 18 : 872 + rnd() * 8]);
  }
  let noise = "";
  for (let i = 3; i < PLOT_W - 2; i++) {
    const top = 857.5 + rnd() * 4 - (rnd() > 0.8 ? 3 : 0);
    const bottom = 865 + rnd() * 4 + (rnd() > 0.8 ? 3 : 0);
    noise += `M${i + 0.5} ${(top - PLOT_TOP).toFixed(1)}V${(bottom - PLOT_TOP).toFixed(1)}`;
  }
  let peaks = "";
  let cyan = "";
  all.forEach(([x, t, b]) => {
    const px = Math.round(x - 264) + 0.5;
    peaks += `M${px} ${(t - PLOT_TOP).toFixed(1)}V${(b - PLOT_TOP).toFixed(1)}`;
    cyan += `M${px - 1} 119.5h2`;
  });
  return { noise, peaks, cyan };
};

const wave = buildWave();

const WavePlot = () => (
  <svg width={PLOT_W} height={249} viewBox={`0 0 ${PLOT_W} 249`}>
    <path d={wave.noise} stroke="#fff" strokeWidth="1.2" />
    <path d={wave.peaks} stroke="#fff" strokeWidth="1.3" />
    <path d={`M2 119.5H${PLOT_W - 1}`} stroke="#f00000" strokeWidth="2" />
    <path d={wave.cyan} stroke="#00e8e8" strokeWidth="2" />
  </svg>
);

/* ---------- data ---------- */

type TGridRow = {
  name: string;
  value?: string;
  check?: "on" | "off";
  indent?: boolean;
};

const gridRows: TGridRow[] = [
  { name: "Channel", value: "WB01" },
  { name: "Data Type", value: "Single" },
  { name: "Sort Method", value: "Valley Seek" },
  { name: "Parzen Mult.", value: "1.00" },
  { name: "Outlier Thr.", value: "2.00" },
  { name: "Sort Start", value: "0" },
  { name: "Sort End", value: "0" },
  { name: "Slice 1 (袿)", value: "0" },
  { name: "Slice 2 (袿)", value: "0" },
  { name: "Slice 3 (袿)", value: "0" },
  { name: "Slice 4 (袿)", value: "0" },
  { name: "Zoom", value: "1.0" },
  { name: "Max w/f draw", value: "100000" },
  { name: "Waveforms View", value: "All" },
  { name: "Clusters Views", value: "As above" },
  { name: "Timeline View", value: "As above" },
  { name: "Only Segment", check: "off" },
  { name: "Range from (s)", value: "0.000", indent: true },
  { name: "Range to (s)", value: "30.339", indent: true },
  { name: "Draw Grid", check: "on" },
  { name: "Draw Thr.", check: "off" },
  { name: "Refr ISI (袿)", value: "1000" },
  { name: "ISIHistMax(ms)", value: "100" },
  { name: "Invalid w/f", value: "Hide" },
  { name: "Electrode Enable", value: "N/A" },
];

type TMenuEntry = {
  label?: string;
  disabled?: boolean;
  hot?: boolean;
  icon?: React.ReactNode;
  iconOn?: boolean;
};

const menuEntries: TMenuEntry[] = [
  { label: "View Only Currently Selected Unit(s)", icon: <Eye under="spark" /> },
  { label: "View Only Unsorted Waveforms", icon: <Eye under="noise" /> },
  {},
  { label: "View Only Selected Time Segment", icon: <Eye under="bar" /> },
  { label: "Create Time Segments..." },
  {},
  { label: "Use Only Currently Visible Waveforms", icon: <HandBox mark="tan" />, iconOn: true },
  { label: "Use Only Unsorted Waveforms", icon: <HandBox mark="red" /> },
  {},
  { label: "Invalidate Waveforms", disabled: true, icon: <Inval kind="i" /> },
  { label: "Invalidate All Except Selected Waveforms", disabled: true, icon: <Inval kind="iring" /> },
  { label: "Invalidate Currently Selected Waveform", disabled: true },
  { label: "Mark All Waveforms As Valid", disabled: true },
  { label: "Invalidate All Waveforms in Selected Unit", disabled: true },
  { label: "Show Invalidated Waveforms" },
  {},
  { label: "Perform Digital Referencing on Continuous Data..." },
  { label: "Up-sample Continuous Data..." },
  { label: "Filter Continuous Data..." },
  {},
  { label: "Detect...", hot: true },
  { label: "Align..." },
  { label: "Re-Threshold..." },
  { label: "Remove Short ISI Waveforms", disabled: true },
  {},
  { label: "Auto-Zoom Waveform Displays" },
];

const channelRows = Array.from({ length: 36 }).map((_, i) => {
  const n = 38 + i;
  const pad = (v: number) => String(v).padStart(2, "0");
  if (n <= 64) return { n, name: `SPK${n}`, samples: "0" };
  if (n <= 68) return { n, name: `WB${pad(n - 64)}`, samples: "1211761" };
  if (n <= 72) return { n, name: `FP${pad(n - 68)}`, samples: "30294" };
  return { n, name: "AI01", samples: "30282" };
});

const menuLabels = ["File", "Edit", "View", "Select", "Waveforms", "Sort", "Units", "Tools", "Window", "Run", "Help"];

const PanelTitle = ({ title, tri, box, h }: { title?: string; tri?: boolean; box?: boolean; h?: number }) => (
  <PanelHeader $h={h}>
    {title && <HeaderGrip />}
    <HeaderTitle>{title}</HeaderTitle>
    {tri && (
      <HeaderIcon>
        <Triangle />
      </HeaderIcon>
    )}
    <HeaderIcon>
      <Pin />
    </HeaderIcon>
    {box && (
      <HeaderIcon>
        <Maximize />
      </HeaderIcon>
    )}
    <HeaderIcon>
      <CloseX />
    </HeaderIcon>
  </PanelHeader>
);

const App = () => {
  return (
    <Page>
      <GlobalStyle />
      <TitleBar>
        <AppIcon />
        <TitleText>Plexon Offline Sorter - 4chDemoPL2.pl2</TitleText>
        <WinButton>
          <svg width="11" height="11" viewBox="0 0 11 11"><path d="M0 6h10" stroke="#111" /></svg>
        </WinButton>
        <WinButton>
          <svg width="11" height="11" viewBox="0 0 11 11"><path d="M0.5 2.5h8v8h-8zM2.5 2.5v-2h8v8h-2" fill="none" stroke="#111" /></svg>
        </WinButton>
        <WinButton>
          <CloseX s={11} c="#111" />
        </WinButton>
      </TitleBar>

      <MenuBar>
        <MenuGrip />
        {menuLabels.map((m) => (
          <MenuItem key={m} $open={m === "Waveforms"}>{m}</MenuItem>
        ))}
      </MenuBar>

      <ToolRow>
        <Toolbar $w={772}>
          <ToolGrip />
          <Gap $w={2} />
          <Cell><Open /></Cell>
          <Cell><Floppy /></Cell>
          <ToolSep />
          <Cell><Scissors /></Cell>
          <Cell><Copy /></Cell>
          <Cell><Paste /></Cell>
          <ToolSep />
          <Cell><Printer /></Cell>
          <Cell><Help /></Cell>
          <Cell><Mark /></Cell>
          <Gap $w={342} />
          {Array.from({ length: 10 }).map((_, i) => (
            <Cell key={i}><Chart n={i} /></Cell>
          ))}
          <ToolCap><DropMark /></ToolCap>
        </Toolbar>
        <Toolbar $w={214}>
          <ToolGrip />
          <Cell $w={23}><NavArrow left letter="c" on /></Cell>
          <Cell $w={23}><NavArrow letter="c" on /></Cell>
          <ToolSep />
          <Cell $w={23}><NavArrow left letter="u" /></Cell>
          <Cell $w={23}><NavArrow letter="u" /></Cell>
          <ToolSep />
          <Cell $w={23}><NavArrow left letter="w" /></Cell>
          <Cell $w={23}><NavArrow letter="w" /></Cell>
          <ToolSep />
          <Cell $w={23}><NavArrow left letter="s" /></Cell>
          <Cell $w={23}><NavArrow letter="s" on /></Cell>
          <ToolCap><DropMark /></ToolCap>
        </Toolbar>
        <Toolbar $w={450}>
          <ToolGrip />
          <Cell $w={20}><PcaLabel>PCA</PcaLabel></Cell>
          <ToolSep />
          <Gap $w={1} />
          <Combo $w={109}><ComboText>X Axis: PC 1</ComboText><ComboArrow><Down /></ComboArrow></Combo>
          <Combo $w={108}><ComboText>Y Axis: PC 2</ComboText><ComboArrow><Down /></ComboArrow></Combo>
          <Combo $w={108}><ComboText>Z Axis: PC 3</ComboText><ComboArrow><Down /></ComboArrow></Combo>
          <ToolSep />
          <Cell $on $w={22}><Axes num="1" /></Cell>
          <Cell $w={23}><Axes num="2" /></Cell>
          <Cell $w={23}><Axes num="3" on={false} /></Cell>
          <ToolCap><DropMark /></ToolCap>
        </Toolbar>
        <Toolbar $w={268}>
          <ToolGrip />
          <Cell $w={21}><Transport d="M5 2l11 8-11 8z" /></Cell>
          <Cell $w={20}><Transport d="M5 3h4v14H5zM11 3h4v14h-4z" fill="#8095bb" /></Cell>
          <ToolSep />
          <Cell><Transport d="M10 2v16L2 10zM18 2v16l-8-8z" /></Cell>
          <Cell>1X</Cell>
          <Cell><Transport d="M2 2l8 8-8 8zM10 2l8 8-8 8z" /></Cell>
          <Cell><Transport d="M2 2h2v16H2zM11 2v16l-7-8zM18 2v16l-7-8z" /></Cell>
          <Cell><Recording /></Cell>
          <ToolSep />
          <Gap $w={3} />
          <Combo $w={58}><ComboText>1 X</ComboText><ComboArrow><Down /></ComboArrow></Combo>
          <Cell $on><Loop /></Cell>
          <ToolCap><DropMark /></ToolCap>
        </Toolbar>
      </ToolRow>

      <Workspace>
        <Dock>
          <UpperDock>
            <LeftStack>
              <MainRow>
                <Panel $w={264}>
                  <PanelTitle title="Control Grid" />
                  <GridBody>
                    {gridRows.map((r) => (
                      <GridRow key={r.name}>
                        <GridName $indent={r.indent}>{r.name}</GridName>
                        <GridValue>
                          {r.check ? <CheckBox $on={r.check === "on"}>{r.check === "on" && <Check />}</CheckBox> : r.value}
                        </GridValue>
                      </GridRow>
                    ))}
                  </GridBody>
                </Panel>

                <Panel $w={633} $ml={5}>
                  <PanelTitle tri />
                  <BandRow>
                    <BigToolbar>
                      <BigTool>Wfs</BigTool>
                      <BigTool>
                        <Inval kind="i" />
                        Invalidate Wfs
                      </BigTool>
                      <BigCap><DropMark /></BigCap>
                    </BigToolbar>
                  </BandRow>
                  <BlackTop>
                    <span>WB01</span>
                    <span>0 wf</span>
                  </BlackTop>
                  <BlackFill />
                </Panel>

                <Panel $w={414} $ml={6}>
                  <PanelTitle title="2D Clusters" tri box />
                  <ClusterView>PCA is invalid for this channel</ClusterView>
                  <TabStrip>
                    <Tab $w={64} $on><TabSorter />Sorter</Tab>
                    <Tab $w={95}><Tab3D />3D Clusters</Tab>
                    <Tab $w={71}><TabSurface />Surface</Tab>
                    <Tab $w={147}><TabWave />Waveform Detection</Tab>
                  </TabStrip>
                </Panel>
              </MainRow>

              <UnitsPanel>
                <PanelTitle title="Units" h={22} />
                <UnitsGrid>
                  <UnitCell $mark $bottom>Unsorted</UnitCell>
                  <UnitCell $bottom />
                  <UnitCell $bottom />
                  <UnitCell $bottom />
                  <UnitCell $bottom />
                  <UnitCell />
                  <UnitCell />
                  <UnitCell />
                  <UnitCell />
                  <UnitCell />
                </UnitsGrid>
              </UnitsPanel>
            </LeftStack>

            <Panel $w={566} $ml={5}>
              <PanelTitle title="Channels" />
              <ChannelsBody>
                <ChannelsMain>
                  <HeadRow>
                    <HeadCell />
                    <HeadCell>Name</HeadCell>
                    <HeadCell>Samples</HeadCell>
                    <HeadCell>Waveforms</HeadCell>
                    <HeadCell />
                    <HeadCell>Unsorted</HeadCell>
                    <HeadCell>Unit a</HeadCell>
                    <HeadCell>Unit b</HeadCell>
                    <HeadCell>Unit c</HeadCell>
                    <HeadCell>Unit d</HeadCell>
                    <HeadCell $clip>Uni</HeadCell>
                  </HeadRow>
                  {channelRows.map((r) => (
                    <DataRow key={r.n} $sel={r.n === 65}>
                      <RowHead $cur={r.n === 65}>{r.n === 65 ? ">>65" : r.n}</RowHead>
                      <DataCell>{r.name}</DataCell>
                      <DataCell>{r.samples}</DataCell>
                      <DataCell>0</DataCell>
                      <DataCell />
                      <DataCell>0</DataCell>
                      <DataCell>-</DataCell>
                      <DataCell>-</DataCell>
                      <DataCell>-</DataCell>
                      <DataCell>-</DataCell>
                      <LastCell />
                    </DataRow>
                  ))}
                  <ScrollStub><HThumb $w={17} /></ScrollStub>
                </ChannelsMain>
                <Gutter><GutterThumb /></Gutter>
              </ChannelsBody>
              <ChannelTabs>
                <Tab $w={80} $on><TabSheet />Channels</Tab>
                <Tab $w={49}>Events</Tab>
                <Tab $w={97}>Sorting Details</Tab>
              </ChannelTabs>
            </Panel>
          </UpperDock>

          <TimelinePanel>
            <PanelTitle title="Timeline" h={22} />
            <TimelineBody>
              <TimelineUpper>
                <Controls>
                  <CtlRow $h={34} $mt={6} $pl={12}>
                    <CtlLabel $w={51}>Showing:</CtlLabel>
                    <FieldStack>
                      <ReadField $h={14}>Cont.: Ch. 65 'WB01'</ReadField>
                      <ReadField />
                    </FieldStack>
                    <PushButton $w={23} $ml={9}>...</PushButton>
                  </CtlRow>
                  <CtlRow $h={14} $mt={8} $pl={11}>
                    <CheckBox $size={12} />
                    <CtlLabel $w={92} $ml={4}>Control Displays</CtlLabel>
                    <CheckBox $size={12} />
                    <CtlLabel $w={90} $ml={4}>Center Selected</CtlLabel>
                  </CtlRow>
                  <CtlRow $h={22} $mt={11}>
                    <CtlLabel $w={71} $right>Zoom</CtlLabel>
                    <NumInput $w={43} $ml={4}>1.0</NumInput>
                    <Spinner>
                      <SpinBtn><SpinTri up /></SpinBtn>
                      <SpinBtn><SpinTri /></SpinBtn>
                    </Spinner>
                    <ReadField $w={62} $h={17} $ml={13} $right>20.00 mV</ReadField>
                  </CtlRow>
                  <CtlRow $h={22} $mt={9}>
                    <CtlLabel $w={71} $right>Thr. (%)</CtlLabel>
                    <NumInput $w={43} $ml={4}>4.82</NumInput>
                    <Spinner>
                      <SpinBtn><SpinTri up /></SpinBtn>
                      <SpinBtn><SpinTri /></SpinBtn>
                    </Spinner>
                    <ReadField $w={62} $h={17} $ml={13} $right>964 礦</ReadField>
                  </CtlRow>
                  <CtlRow $h={20} $mt={10} $pl={6}>
                    <CtlLabel $w={97}>Detect Waveforms</CtlLabel>
                    <PushButton $w={64}>Options...</PushButton>
                    <PushButton $w={56} $ml={5}>Detect</PushButton>
                  </CtlRow>
                  <CtlRow $h={20} $mt={9}>
                    <CtlLabel $w={77} $right $drop={5}>Low-cut Filter</CtlLabel>
                    <SelectBox $w={79} $ml={8}>Butterworth<Chevron /></SelectBox>
                    <SelectBox $w={58} $ml={7} $disabled>4-pole<Chevron gray /></SelectBox>
                  </CtlRow>
                  <CtlRow $h={20} $mt={9}>
                    <CtlLabel $w={77} $right>Cutoff Freq</CtlLabel>
                    <NumInput $w={56} $ml={8} $disabled>250</NumInput>
                    <CtlLabel $w={24} $ml={7}>Hz</CtlLabel>
                    <PushButton $w={56}>Apply</PushButton>
                  </CtlRow>
                </Controls>
                <SliderCol>
                  <SliderTrack><SliderMark /></SliderTrack>
                </SliderCol>
                <PlotColumn>
                  <Plot><WavePlot /></Plot>
                </PlotColumn>
              </TimelineUpper>
              <TimelineLower>
                <CtlLabel $w={67} $ml={12}>Scroll Range</CtlLabel>
                <ScrollInput>1.0000</ScrollInput>
                <ReadField $w={52} $h={19} $ml={20} $right>0.0000</ReadField>
                <PushButton $w={55} $h={18} $ml={6} $focus>Zoom Out</PushButton>
                <PushButton $w={55} $h={18} $ml={3}>Zoom In</PushButton>
                <LowerThumb />
                <LowerEnd>
                  <ReadField $w={52} $h={19} $right>1.0000</ReadField>
                </LowerEnd>
              </TimelineLower>
            </TimelineBody>
          </TimelinePanel>
        </Dock>

        <Rail>
          <RailBar $mt={5}>
            <RailGrip $h={7} />
            <RailCell><ScatterTool /></RailCell>
            <RailCell><BigX /></RailCell>
            <RailCell><BigX small /></RailCell>
            <RailCell><Inval kind="plus" /></RailCell>
            <RailCell><Inval kind="minus" /></RailCell>
            <RailCell><Inval kind="mring" /></RailCell>
            <RailCell><Inval kind="i" /></RailCell>
            <RailCell><Inval kind="iring" /></RailCell>
            <RailCap $h={9} $mt={2}><RailMark /></RailCap>
          </RailBar>
          <RailBar $mt={4}>
            <RailGrip $h={8} />
            <RailCell><PickTool /></RailCell>
            <RailCell><WaveAdd /></RailCell>
            <RailSep $h={6} />
            <RailCell><Strokes count={1} /></RailCell>
            <RailCell><Strokes count={2} /></RailCell>
            <RailCell><Strokes count={3} /></RailCell>
            <RailSep $h={5} />
            <RailCell><Funnel num="1" /></RailCell>
            <RailCell><Funnel num="2" /></RailCell>
            <RailCell><Assign num="1" /></RailCell>
            <RailCell><Assign num="2" /></RailCell>
            <RailSep $h={6} />
            <RailCell><Stop /></RailCell>
            <RailCap $h={9} $mt={3}><RailMark /></RailCap>
          </RailBar>
          <RailBar $mt={5}>
            <RailGrip $h={7} />
            <RailCell><HandBox mark="red" /></RailCell>
            <RailCell $on><HandBox mark="tan" /></RailCell>
            <RailSep $h={4} />
            <RailCell><Eye under="spark" /></RailCell>
            <RailCell><Eye under="noise" /></RailCell>
            <RailCell><Eye under="bar" /></RailCell>
            <RailCap $h={10} $mt={4}><RailMark /></RailCap>
          </RailBar>
          <RailBar $mt={13}>
            <RailGrip $h={8} />
            <RailCell><Magnify sign="-" /></RailCell>
            <RailCell><Magnify sign="+" /></RailCell>
            <RailCell><Magnify sign="-" /></RailCell>
            <RailCell><Magnify sign="+" /></RailCell>
            <RailCell><Magnify sign="-" below /></RailCell>
            <RailCell><Magnify sign="+" below /></RailCell>
            <RailSep $h={5} />
            <RailCell><Magnify sign="+" /></RailCell>
            <RailSep $h={6} />
            <RailCell><SmallArrow rot={0} /></RailCell>
            <RailCell><SmallArrow rot={180} /></RailCell>
            <RailCell><SmallArrow rot={90} /></RailCell>
            <RailCell><SmallArrow rot={270} /></RailCell>
            <RailCell><Pencil /></RailCell>
            <RailCell><Pencil /></RailCell>
            <RailCap $h={10} $mt={2}><RailMark /></RailCap>
          </RailBar>
        </Rail>
      </Workspace>

      <StatusBar>
        <StatusMain>Extract waveforms from continuous data</StatusMain>
        <StatusCell $w={178}>Free Mem: 46254 / 65277 M</StatusCell>
        <StatusCell $w={103}>Dropped: None</StatusCell>
        <StatusCell $w={51}>t: 3.803</StatusCell>
        <StatusCell $w={80}>V: 18.05 mV</StatusCell>
        <StatusCell $w={20}>X:</StatusCell>
        <StatusCell $w={21}>Y:</StatusCell>
        <StatusCell $w={20}>Z:</StatusCell>
      </StatusBar>

      <Dropdown>
        {menuEntries.map((e, i) =>
          e.label ? (
            <DropItem key={i} $disabled={e.disabled} $hot={e.hot}>
              <DropIcon $on={e.iconOn}>{e.icon}</DropIcon>
              {e.label}
            </DropItem>
          ) : (
            <DropSep key={i} />
          )
        )}
      </Dropdown>

      <RedBox $x={177} $y={18} $w={98} $h={35} />
      <RedBox $x={195} $y={402} $w={93} $h={34} />
      <Badge $x={167} $y={29}>1</Badge>
      <Badge $x={169} $y={420}>2</Badge>
    </Page>
  );
};

export default App;
